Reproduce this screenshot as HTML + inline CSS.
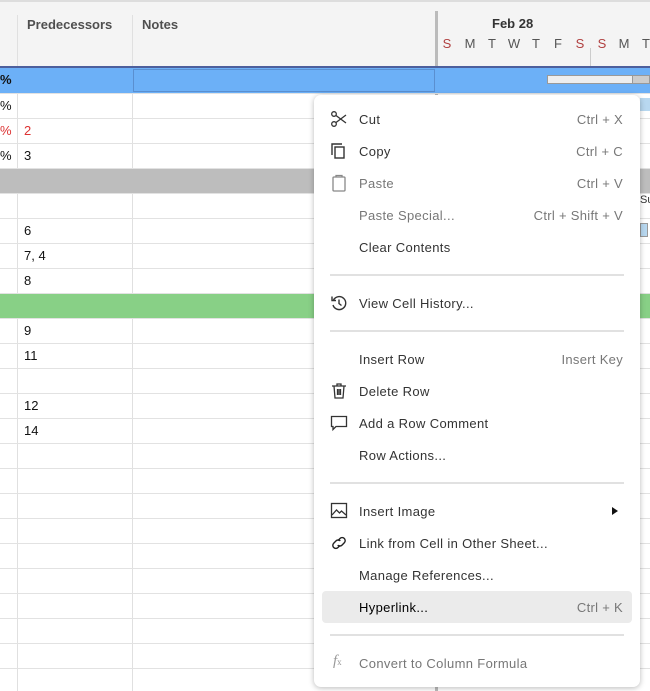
<!DOCTYPE html>
<html><head><style>
body{margin:0;width:650px;height:691px;overflow:hidden;background:#fff;font-family:"Liberation Sans",sans-serif;position:relative}
.a{position:absolute}
.hdr{left:0;top:0;width:650px;height:67px;background:#f4f4f4;border-top:2px solid #ddd;box-sizing:border-box}
.hl{height:1px;background:#e2e2e2;left:0;width:650px}
.vl{width:1px;background:#e0e0e0;top:15px;bottom:0}
.t{font-size:13px;color:#111}
.menu{left:314px;top:95px;width:326px;height:592px;background:#fff;border-radius:7px;box-shadow:0 1px 6px rgba(0,0,0,.28)}
.it{position:absolute;left:45px;font-size:13px;color:#333;line-height:16px;letter-spacing:0.35px}
.sc{position:absolute;right:17px;font-size:13px;color:#777;line-height:16px;letter-spacing:0.3px}
.dis{color:#777}
.sep{position:absolute;left:16px;width:294px;height:2px;background:#e1e1e1}
.ic{position:absolute;left:16px;width:18px;height:18px}
.d{position:absolute;width:14px;text-align:center}
</style></head><body>
<div class="a hdr"></div>
<div class="a vl" style="left:17px"></div>
<div class="a vl" style="left:132px"></div>
<div class="a" style="left:435px;top:11px;width:3px;height:680px;background:#bbb"></div>
<div class="a" style="left:590px;top:48px;width:1px;height:20px;background:#ccc"></div>
<div class="a t" style="left:27px;top:17px;color:#333;font-weight:bold;opacity:.85">Predecessors</div>
<div class="a t" style="left:142px;top:17px;color:#333;font-weight:bold;opacity:.85">Notes</div>
<div class="a t" style="left:492px;top:16px;font-weight:bold;color:#333">Feb 28</div>
<div class="a" style="left:0;top:36px;font-size:13px;color:#555">
<span class="d" style="left:440px;color:#b04040">S</span><span class="d" style="left:463px">M</span><span class="d" style="left:485px">T</span><span class="d" style="left:507px">W</span><span class="d" style="left:529px">T</span><span class="d" style="left:551px">F</span><span class="d" style="left:573px;color:#b04040">S</span><span class="d" style="left:595px;color:#b04040">S</span><span class="d" style="left:617px">M</span><span class="d" style="left:639px">T</span></div>
<div class="a" style="left:0;top:66px;width:650px;height:2px;background:#4d5f9c"></div>
<div class="a" style="left:0;top:68px;width:650px;height:25px;background:#6cb0f7"></div>
<div class="a" style="left:133px;top:69px;width:302px;height:23px;border:1px solid #5a8fd0;box-sizing:border-box"></div>
<div class="a" style="left:547px;top:75px;width:103px;height:9px;background:#ccc;border:1px solid #999;box-sizing:border-box"></div>
<div class="a" style="left:548px;top:76px;width:84px;height:7px;background:#eee;border-right:1px solid #999"></div>
<div class="a" style="left:0;top:168px;width:650px;height:25px;background:#bdbdbd"></div>
<div class="a" style="left:0;top:293px;width:650px;height:25px;background:#88d086"></div>
<div id="rows"></div>
<div class="a t" style="left:0;top:72px;font-weight:bold">%</div>
<div class="a t" style="left:0;top:98px">%</div>
<div class="a t" style="left:0;top:123px;color:#d33">%</div>
<div class="a t" style="left:24px;top:123px;color:#d33">2</div>
<div class="a t" style="left:0;top:148px">%</div>
<div class="a t" style="left:24px;top:148px">3</div>
<div class="a t" style="left:24px;top:223px">6</div>
<div class="a t" style="left:24px;top:248px">7, 4</div>
<div class="a t" style="left:24px;top:273px">8</div>
<div class="a t" style="left:24px;top:323px">9</div>
<div class="a t" style="left:24px;top:348px">11</div>
<div class="a t" style="left:24px;top:398px">12</div>
<div class="a t" style="left:24px;top:423px">14</div>
<div class="a" style="left:640px;top:98px;width:10px;height:13px;background:#b8d8f0"></div>
<div class="a" style="left:640px;top:223px;width:6px;height:12px;background:#b8d8f0;border:1px solid #999"></div>
<div class="a" style="left:640px;top:194px;font-size:11px;color:#333">Su</div>
<script>
var r=document.getElementById('rows'),h='';
for(var y=93;y<691;y+=25){h+='<div class="a hl" style="top:'+y+'px"></div>';}
r.innerHTML=h;
</script>
<div class="a menu">
<svg class="ic" style="top:15px" viewBox="0 0 18 18" fill="none" stroke="#333" stroke-width="1.3"><circle cx="4" cy="4" r="2.3"/><circle cx="4" cy="14" r="2.3"/><path d="M6 5.5L16 13M6 12.5L16 5"/></svg>
<div class="it" style="top:17px">Cut</div><div class="sc" style="top:17px">Ctrl + X</div>
<svg class="ic" style="top:47px" viewBox="0 0 18 18" fill="none" stroke="#333" stroke-width="1.4"><path d="M2 13V2h10"/><rect x="5" y="5" width="9" height="11"/></svg>
<div class="it" style="top:49px">Copy</div><div class="sc" style="top:49px">Ctrl + C</div>
<svg class="ic" style="top:79px" viewBox="0 0 18 18" fill="none" stroke="#888" stroke-width="1.3"><rect x="3" y="3" width="12" height="14" rx="1"/><path d="M6 3V1.5h6V3"/></svg>
<div class="it dis" style="top:81px">Paste</div><div class="sc" style="top:81px">Ctrl + V</div>
<div class="it dis" style="top:113px">Paste Special...</div><div class="sc" style="top:113px">Ctrl + Shift + V</div>
<div class="it" style="top:145px">Clear Contents</div>
<div class="sep" style="top:179px"></div>
<svg class="ic" style="top:199px" viewBox="0 0 18 18" fill="none" stroke="#333" stroke-width="1.4"><path d="M3.5 6A6.5 6.5 0 1 1 3 11"/><path d="M2 2.5v4h4"/><path d="M9 5.5v4l2.5 2"/></svg>
<div class="it" style="top:201px">View Cell History...</div>
<div class="sep" style="top:235px"></div>
<div class="it" style="top:257px">Insert Row</div><div class="sc" style="top:257px">Insert Key</div>
<svg class="ic" style="top:287px" viewBox="0 0 18 18" fill="none" stroke="#333" stroke-width="1.3"><path d="M2 4h14M7 4V2h4v2M4 4l1 12h8l1-12M7.5 7v6M9 7v6M10.5 7v6"/></svg>
<div class="it" style="top:289px">Delete Row</div>
<svg class="ic" style="top:319px" viewBox="0 0 18 18" fill="none" stroke="#333" stroke-width="1.3"><path d="M1.5 2.5h15v10H6l-3 3v-3H1.5z"/></svg>
<div class="it" style="top:321px">Add a Row Comment</div>
<div class="it" style="top:353px">Row Actions...</div>
<div class="sep" style="top:387px"></div>
<svg class="ic" style="top:407px" viewBox="0 0 18 18" fill="none" stroke="#333" stroke-width="1.3"><rect x="1.5" y="1.5" width="15" height="14"/><path d="M2 13l4.5-5 3 3 2-2 4.5 4"/></svg>
<div class="it" style="top:409px">Insert Image</div>
<div class="a" style="left:298px;top:412px;width:0;height:0;border-left:6px solid #111;border-top:4px solid transparent;border-bottom:4px solid transparent"></div>
<svg class="ic" style="top:439px" viewBox="0 0 18 18" fill="none" stroke="#222" stroke-width="1.4"><path d="M8 6.5l2-2a3 3 0 0 1 4.3 4.3l-2.3 2.3a3 3 0 0 1-4.3 0"/><path d="M10 11.5l-2 2a3 3 0 0 1-4.3-4.3L6 6.9a3 3 0 0 1 4.3 0"/></svg>
<div class="it" style="top:441px">Link from Cell in Other Sheet...</div>
<div class="it" style="top:473px">Manage References...</div>
<div class="a" style="left:8px;top:496px;width:310px;height:32px;background:#ebebeb;border-radius:4px"></div>
<div class="it" style="top:505px;color:#000">Hyperlink...</div><div class="sc" style="top:505px">Ctrl + K</div>
<div class="sep" style="top:539px"></div>
<div class="a" style="left:19px;top:558px;font-family:'Liberation Serif',serif;font-style:italic;font-size:15px;color:#999">f<span style="font-size:9px;font-style:normal">x</span></div>
<div class="it dis" style="top:561px">Convert to Column Formula</div>
</div>
</body></html>
